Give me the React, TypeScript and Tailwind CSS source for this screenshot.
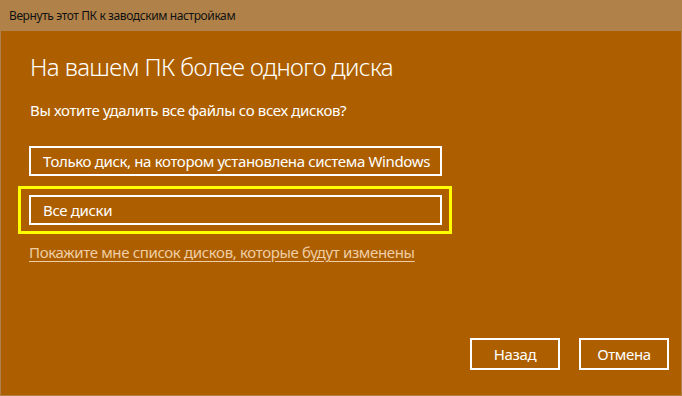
export default function App() {
  const font = { fontFamily: '"Noto Sans", "Open Sans", sans-serif' };
  return (
    <div className="w-[682px] h-[396px] bg-[#b0824a] flex flex-col" style={font}>
      <div className="h-[31px] flex items-center pl-[9px] text-[12px] text-[#111] tracking-[-0.4px] whitespace-nowrap">
        Вернуть этот ПК к заводским настройкам
      </div>
      <div className="flex-1 mx-[1px] mb-[1px] bg-[#ad5f00] flex flex-col pl-[28px] text-white text-[15px] tracking-[-0.35px] whitespace-nowrap">
        <div className="mt-[20px] h-[32px] leading-[32px] text-[24px] font-light pl-[1px] tracking-[-0.6px]">
          На вашем ПК более одного диска
        </div>
        <div className="mt-[17px] h-[20px] leading-[20px] pl-[1px]">
          Вы хотите удалить все файлы со всех дисков?
        </div>
        <div className="mt-[26px] w-[413px] h-[30px] border-2 border-white flex items-center pl-[12px]">
          Только диск, на котором установлена система Windows
        </div>
        <div className="mt-[10px] -ml-[11px] w-[434px] h-[48px] border-[3px] border-[#ffff00] pl-[8px] pt-[6px]">
          <div className="w-[413px] h-[30px] border-2 border-white flex items-center pl-[12px]">
            Все диски
          </div>
        </div>
        <div className="mt-[8px] h-[20px] leading-[20px] text-[#efcda5] underline underline-offset-[3px]">
          Покажите мне список дисков, которые будут изменены
        </div>
        <div className="mt-auto mb-[25px] mr-[12px] flex justify-end gap-[19px]">
          <div className="w-[90px] h-[32px] border-2 border-white flex items-center justify-center">
            Назад
          </div>
          <div className="w-[90px] h-[32px] border-2 border-white flex items-center justify-center">
            Отмена
          </div>
        </div>
      </div>
    </div>
  );
}
